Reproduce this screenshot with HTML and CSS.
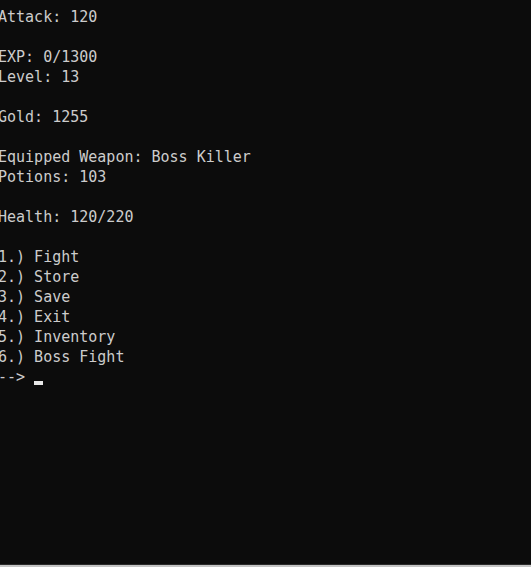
FILE: index.html
```html
<!DOCTYPE html>
<html>
<head>
<meta charset="utf-8">
<link rel="stylesheet" href="styles.css">
</head>
<body>
<div class="console">
<pre class="out">Attack: 120

EXP: 0/1300
Level: 13

Gold: 1255

Equipped Weapon: Boss Killer
Potions: 103

Health: 120/220

1.) Fight
2.) Store
3.) Save
4.) Exit
5.) Inventory
6.) Boss Fight
--&gt; <span class="cursor"></span></pre>
</div>
<div class="edge"></div>
</body>
</html>
```
FILE: styles.css
```css
html, body {
  margin: 0;
  padding: 0;
  background: #0c0c0c;
  height: 567px;
  overflow: hidden;
}
body {
  display: flex;
  flex-direction: column;
}
.console {
  flex: 1;
  background: #0c0c0c;
  padding-top: 7px;
}
.out {
  margin: 0 0 0 -2px;
  font-family: "DejaVu Sans Mono", monospace;
  font-size: 15px;
  line-height: 20px;
  color: #cccccc;
  white-space: pre;
}
.cursor {
  display: inline-block;
  width: 9px;
  height: 4px;
  background: #e8e8e8;
  vertical-align: -3px;
}
.edge {
  flex: none;
  height: 2px;
  border-top: 1px solid #2a2a2a;
  background: #c4c4c4;
}
```
